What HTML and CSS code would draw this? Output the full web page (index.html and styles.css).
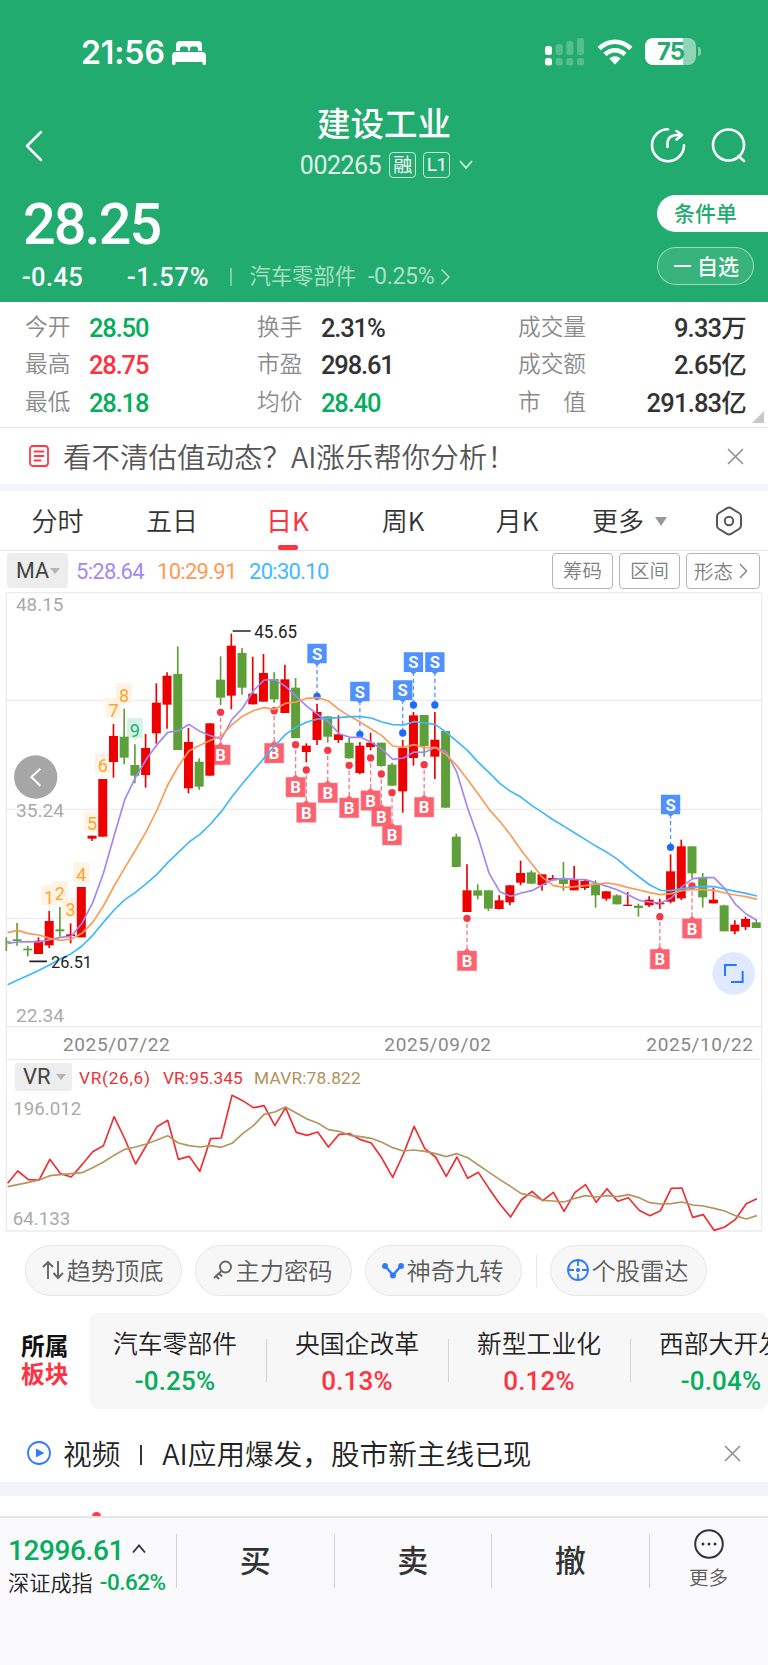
FILE: index.html
```html
<!DOCTYPE html>
<html lang="zh-CN">
<head>
<meta charset="utf-8">
<title>建设工业 002265</title>
<link rel="stylesheet" href="styles.css">
</head>
<body>
<header class="header">
  <div class="status">
    <span class="time">21:56</span>
    <svg class="bed" width="34" height="24" viewBox="0 0 34 24" fill="#fff"><path d="M4 10V4q0-4 4-4h18q4 0 4 4v6h-4V8q0-2.500-2.500-2.500h-3.500Q18 5.500 18 8v2h-2V8q0-2.500-2-2.500h-3.500Q8 5.500 8 8v2zM0 15q0-4 4-4h26q4 0 4 4v7.500q0 1.500-1.500 1.500h-.5q-1.500 0-1.500-1.500V21H3.500v1.500Q3.500 24 2 24h-.5Q0 24 0 22.500z"/></svg>
    <svg class="signal" width="40" height="28" viewBox="0 0 40 28" fill="#fff"><rect x="0" y="8" width="7" height="9" rx="2.500"/><rect x="0" y="20" width="7" height="7.500" rx="2.500"/><g opacity=".23"><rect x="10.700" y="6" width="7" height="11" rx="2.500"/><rect x="21.300" y="3" width="7" height="14" rx="2.500"/><rect x="32" y="0" width="7" height="17" rx="2.500"/><rect x="10.700" y="20" width="7" height="7.500" rx="2.500"/><rect x="21.300" y="20" width="7" height="7.500" rx="2.500"/><rect x="32" y="20" width="7" height="7.500" rx="2.500"/></g></svg>
    <svg class="wifi" width="36" height="26" viewBox="0 0 36 26" fill="none" stroke="#fff" stroke-width="4.600"><path d="M2.200 9.500Q9.500 2.800 18 2.800T33.800 9.500M8 15.500Q12.500 11.200 18 11.200T28 15.500"/><path d="M18 25.500l-5.700-6q5.700-4.500 11.400 0z" fill="#fff" stroke="none"/></svg>
    <div class="battery"><span>75</span></div><i class="nub"></i>
  </div>
  <div class="nav">
    <svg class="back" width="18" height="32" viewBox="0 0 18 32" fill="none" stroke="#fff" stroke-width="2.500" stroke-linecap="round" stroke-linejoin="round"><path d="M16 2L2 16l14 14"/></svg>
    <div class="title">
      <h1>建设工业</h1>
      <div class="code"><span class="num">002265</span><b class="rong">融</b><b>L1</b><svg width="14" height="10" viewBox="0 0 14 10" fill="none" stroke="#fff" stroke-opacity=".85" stroke-width="1.600"><path d="M1 1l6 7 6-7"/></svg></div>
    </div>
    <svg width="36" height="36" viewBox="0 0 36 36" fill="none" stroke="#fff" stroke-width="2.600" stroke-linecap="round" stroke-linejoin="round"><path d="M18 2.200a16 16 0 1 0 16 16M17.500 20v-3q0-9 10-9h4M26.500 4l5.500 4-5.500 4.500"/></svg>
    <svg class="search" width="36" height="36" viewBox="0 0 36 36" fill="none" stroke="#fff" stroke-width="2.600" stroke-linecap="round"><circle cx="17.500" cy="18" r="15.500"/><path d="M27.500 29l5.500 5"/></svg>
  </div>
  <div class="quote">
    <div class="price num">28.25</div>
    <div class="change num"><span class="c1">-0.45</span><span class="c2">-1.57%</span><i></i><span class="ind">汽车零部件</span><span class="c3">-0.25%</span><svg width="11" height="18" viewBox="0 0 11 18" fill="none" stroke="#fff" stroke-opacity=".6" stroke-width="1.700"><path d="M1.500 1.500L9 9l-7.500 7.500"/></svg></div>
    <div class="actions"><div class="cond">条件单</div><div class="fav"><i></i>自选</div></div>
  </div>
</header>

<section class="stats">
  <span>今开</span><b class="num g">28.50</b><span>换手</span><b class="num">2.31%</b><span>成交量</span><b class="num r">9.33万</b>
  <span>最高</span><b class="num red">28.75</b><span>市盈</span><b class="num">298.61</b><span>成交额</span><b class="num r">2.65亿</b>
  <span>最低</span><b class="num g">28.18</b><span>均价</span><b class="num g">28.40</b><span class="wide"><u>市</u><u>值</u></span><b class="num r">291.83亿</b>
  <i class="corner"></i>
</section>

<section class="notice ai">
  <svg width="20" height="22" viewBox="0 0 20 22" fill="none" stroke="#ff3a45" stroke-width="1.800"><rect x="1" y="1" width="18" height="20" rx="3"/><path d="M5.500 6.500h9M5.500 11h9M5.500 15.500h6" stroke-linecap="round"/></svg>
  <p>看不清估值动态？AI涨乐帮你分析！</p>
  <svg class="x" width="17" height="17" viewBox="0 0 17 17" stroke="#909090" stroke-width="1.600"><path d="M1 1l15 15M16 1L1 16"/></svg>
</section>

<nav class="tabs">
  <span>分时</span><span>五日</span><span class="on">日K</span><span>周K</span><span>月K</span><span class="more">更多<i class="tri"></i></span>
  <svg width="28" height="30" viewBox="0 0 28 30" fill="none" stroke="#555" stroke-width="2"><path d="M12 2.200q2-1.200 4 0l8 4.800q2 1.200 2 3.500v9q0 2.300-2 3.500l-8 4.800q-2 1.200-4 0L4 23q-2-1.200-2-3.500v-9Q2 8.200 4 7z"/><circle cx="14" cy="15" r="4.200"/></svg>
</nav>

<section class="ma">
  <div class="pick">MA<i class="tri"></i></div>
  <span class="num m5">5:28.64</span><span class="num m10">10:29.91</span><span class="num m20">20:30.10</span>
  <div class="btns"><span>筹码</span><span>区间</span><span class="w">形态<svg width="9" height="16" viewBox="0 0 9 16" fill="none" stroke="#888" stroke-width="1.500"><path d="M1 1l6.500 7L1 15"/></svg></span></div>
</section>

<svg class="kchart" id="kchart" viewBox="0 0 2304 1410"></svg>
<section class="vrhead">
  <div class="pick">VR<i class="tri"></i></div><span class="num v1">VR(26,6)</span><span class="num v2">VR:95.345</span><span class="num v3">MAVR:78.822</span>
</section>
<svg class="vrchart" id="vrchart" viewBox="0 216 2304 429"></svg>

<section class="tools">
  <div><svg width="22" height="20" viewBox="0 0 22 20" fill="none" stroke="#666" stroke-width="1.900"><path d="M6 19V2M1 7l5-5 5 5M16 1v17M11.500 13l4.500 5 5-5"/></svg>趋势顶底</div>
  <div><svg width="20" height="20" viewBox="0 0 20 20" fill="none" stroke="#666" stroke-width="1.900"><circle cx="12.500" cy="7" r="5.500"/><path d="M8.500 11L1 18M3 16l3 3M6 13.500l3 3"/></svg>主力密码</div>
  <div><svg width="22" height="20" viewBox="0 0 22 20" fill="#2f7bff" stroke="#2f7bff" stroke-width="2.400"><path d="M3 6l8 9 8-9" fill="none"/><circle cx="3" cy="6" r="1.800"/><circle cx="19" cy="6" r="1.800"/><circle cx="11" cy="15.500" r="1.800"/></svg>神奇九转</div>
  <i></i>
  <div><svg width="22" height="22" viewBox="0 0 22 22" fill="none" stroke="#2f7bff" stroke-width="1.800"><circle cx="11" cy="11" r="10"/><path d="M11 1v6M11 15v6M1 11h6M15 11h6"/><circle cx="11" cy="11" r="1.200" fill="#2f7bff"/></svg>个股雷达</div>
</section>

<section class="sector">
  <div class="name">所属<br><em>板块</em></div>
  <div class="list">
    <div><p>汽车零部件</p><b class="num g">-0.25%</b></div>
    <div><p>央国企改革</p><b class="num red">0.13%</b></div>
    <div><p>新型工业化</p><b class="num red">0.12%</b></div>
    <div><p>西部大开发</p><b class="num g">-0.04%</b></div>
  </div>
</section>

<section class="notice video">
  <svg width="24" height="24" viewBox="0 0 24 24" fill="none" stroke="#2f7bff" stroke-width="1.800"><circle cx="12" cy="12" r="11"/><path d="M9.500 8.300l7 3.700-7 3.700z" fill="#2f7bff" stroke-width="1"/></svg>
  <p>视频<i></i>AI应用爆发，股市新主线已现</p>
  <svg class="x" width="17" height="17" viewBox="0 0 17 17" stroke="#909090" stroke-width="1.600"><path d="M1 1l15 15M16 1L1 16"/></svg>
</section>
<div class="peek"><i></i></div>

<footer class="bar">
  <div class="index">
    <div class="pt num">12996.61<svg width="14" height="10" viewBox="0 0 14 10" fill="none" stroke="#333" stroke-width="1.800"><path d="M1 8.500l6-7 6 7"/></svg></div>
    <div class="nm">深证成指<span class="num">-0.62%</span></div>
  </div>
  <div class="act">买</div><div class="act">卖</div><div class="act">撤</div>
  <div class="act last"><svg width="30" height="30" viewBox="0 0 30 30" fill="#333"><circle cx="15" cy="15" r="13.800" fill="none" stroke="#333" stroke-width="2"/><circle cx="9" cy="15" r="1.500"/><circle cx="15" cy="15" r="1.500"/><circle cx="21" cy="15" r="1.500"/></svg>更多</div>
</footer>
<script src="chart.js"></script>
</body>
</html>
```
FILE: styles.css
```css
* { box-sizing: border-box; margin: 0; padding: 0; }
body { width: 768px; height: 1665px; overflow: hidden; background: #fff; color: #333; font-family: "Liberation Sans", "Noto Sans CJK SC", sans-serif; }
i, em { font-style: normal; }
svg { display: block; flex: none; }
.num { font-family: Roboto, "Noto Sans CJK SC", sans-serif; letter-spacing: -0.045em; white-space: nowrap; }
.g { color: #06ad5c; }
.red { color: #ff333f; }
.tri { border: 6.5px solid transparent; border-top: 9px solid #999; border-bottom: 0; }

.header { height: 302px; background: #22ab6e; color: #fff; }
.status { height: 104px; display: flex; align-items: flex-start; padding: 38px 0 0 81px; }
.time { width: 91px; font: 600 32px/30px Inter, sans-serif; letter-spacing: -0.1px; }
.bed { margin-top: 3px; }
.signal { margin-left: 339px; }
.wifi { margin: 1px 0 0 12px; }
.battery { width: 51px; height: 27px; margin-left: 12px; border-radius: 8px; overflow: hidden; background: linear-gradient(90deg, #fff 75%, #90d5b7 75%); color: #22ab6e; text-align: center; font: 700 24px/28px Inter, sans-serif; letter-spacing: -1px; }
.nub { width: 3px; height: 9px; margin: 9px 0 0 1.500px; border-radius: 0 3px 3px 0; background: #7fcea9; }
.nav { height: 82px; display: flex; align-items: flex-start; padding-left: 25px; }
.back { margin-top: 26px; }
.title { width: 607px; padding-left: 73px; height: 82px; text-align: center; }
.title h1 { margin-right: -2px; font: 500 33.500px/36px "Noto Sans CJK SC"; }
.title + svg { margin-top: 23px; }
.search { margin-left: 25px; margin-top: 23px; }
.code { display: flex; align-items: center; justify-content: center; height: 30px; margin: 10px -7px 0 0; }
.code .num { font-size: 25px; letter-spacing: -0.5px; opacity: .85; margin-right: 8px; line-height: 30px; padding-top: 2px; }
.code b { width: 27px; height: 26px; margin-right: 7px; border: 1.500px solid rgba(255,255,255,.75); border-radius: 4px; font: 400 19px/23px Roboto, sans-serif; letter-spacing: -0.5px; }
.code .rong { font: 400 19px/22px "Noto Sans CJK SC"; letter-spacing: 0; }
.code svg { margin-left: 2px; }
.quote { height: 116px; display: grid; grid-template-columns: 657px 111px; grid-template-rows: 75px 41px; }
.price { padding-left: 23px; font-size: 57.500px; line-height: 77px; font-weight: 500; letter-spacing: -1.900px; }
.change { display: flex; align-items: center; padding-left: 22px; font-size: 25.500px; font-weight: 500; line-height: 32px; height: 32px; letter-spacing: .4px; }
.c1 { width: 105px; }
.c2 { width: 103px; letter-spacing: .7px; }
.change i { width: 1.500px; height: 18px; background: rgba(255,255,255,.4); }
.ind { margin-left: 18px; padding-bottom: 1px; font-size: 21.300px; font-weight: 400; opacity: .6; letter-spacing: 0; }
.c3 { margin-left: 12px; width: 72px; font-size: 23px; font-weight: 400; opacity: .62; letter-spacing: -0.300px; }
.actions { grid-column: 2; grid-row: 1 / 3; padding-top: 9px; font: 400 21px/34px "Noto Sans CJK SC"; }
.cond { height: 37px; padding-left: 17px; border-radius: 19px 0 0 19px; background: #fff; color: #22ab6e; font-weight: 500; }
.fav { width: 97px; height: 38px; margin-top: 15px; display: flex; align-items: center; border: 1px solid rgba(255,255,255,.5); border-radius: 19px; background: rgba(255,255,255,.1); padding: 0 0 2px 16px; font-weight: 500; }
.fav i { width: 17px; height: 2px; margin: 1px 6px 0 0; background: #fff; }

.stats { position: relative; height: 126px; padding: 6px 22px 6px 25px; display: grid; grid-template-columns: 64px 168px 64px 197px 80px 148px; grid-template-rows: repeat(3, 37.500px); align-items: center; border-bottom: 1px solid #e8e8e8; }
.stats span { color: #8a8a8a; font: 350 22.700px/32px "Noto Sans CJK SC"; white-space: nowrap; padding-bottom: 2px; }
.stats .wide { display: flex; width: 68px; justify-content: space-between; }
.stats u { text-decoration: none; }
.stats b { font-size: 25.500px; font-weight: 500; line-height: 32px; letter-spacing: -1.150px; padding-top: 2px; }
.stats .r { text-align: right; letter-spacing: -0.8px; }
.corner { position: absolute; right: 4px; bottom: 4px; border: 6.500px solid transparent; border-right-color: #c8c8c8; border-bottom-color: #c8c8c8; }

.notice { display: flex; align-items: center; }
.notice p { flex: 1; font: 350 28.500px/40px "Noto Sans CJK SC"; white-space: nowrap; }
.ai { height: 63px; padding: 0 24px 0 29px; border-bottom: 7px solid #f3f4f9; }
.ai p { margin-left: 14px; color: #555; }

.tabs { height: 60px; display: grid; grid-template-columns: 115px 114px 117px 114px 114px 135px 40px; align-items: center; border-bottom: 1px solid #e4e4e4; font: 350 26px/57px "Noto Sans CJK SC"; color: #333; }
.tabs span { text-align: center; height: 59px; }
.tabs .on { position: relative; color: #ff333f; font-weight: 400; }
.tabs .on::after { content: ""; position: absolute; left: 49px; bottom: 0; width: 20px; height: 5px; border-radius: 2px; background: #ff333f; }
.tabs .more { display: flex; align-items: center; padding: 0 0 2px 18px; }
.more .tri { margin: 4px 0 0 11px; }
.tabs svg { margin-left: 6px; }

.ma { height: 39px; display: flex; padding: 2px 7px 0; align-items: flex-start; font-size: 22px; line-height: 36px; }
.pick { background: #ededed; border-radius: 3px; display: flex; align-items: center; color: #444; font-family: Roboto, sans-serif; }
.ma .pick { width: 61px; height: 35px; padding-left: 9px; font-size: 21.5px; }
.pick .tri { border-width: 5px; border-top: 6px solid #b4b4b4; border-bottom: 0; margin-left: 1px; }
.m5 { color: #a58af5; margin-left: 8px; width: 81px; }
.m10 { color: #ff9a55; width: 92px; }
.m20 { color: #44b9ff; }
.ma .num { letter-spacing: -0.720px; line-height: 38px; }
.btns { display: flex; gap: 6px; margin: 0 1px 0 auto; }
.btns span { height: 36px; width: 61px; border: 1.500px solid #b5b5b5; border-radius: 4px; text-align: center; font: 350 19.500px/32px "Noto Sans CJK SC"; color: #808080; }
.btns .w { width: 74px; display: flex; align-items: center; padding-left: 7px; gap: 6px; }
.kchart { width: 768px; height: 470px; }
.kchart text, .vrchart text { font-family: Roboto, sans-serif; }
.vrhead { height: 32px; margin: 0 6px; padding: 3px 0 0 8px; display: flex; border-left: 1px solid #eaeaea; border-right: 1px solid #eaeaea; font-size: 17.300px; line-height: 30px; }
.vrhead .pick { width: 57px; height: 28px; padding-left: 8px; font-size: 22px; margin-right: 7px; }
.vrhead .pick .tri { margin-left: 5px; }
.vrhead .num { letter-spacing: .1px; }
.v1, .v2 { color: #eb3136; }
.vrhead .v1 { width: 84px; letter-spacing: .7px; }
.v2 { width: 91px; }
.vrhead .v3 { color: #b1905a; letter-spacing: .2px; }
.vrchart { width: 768px; height: 143px; }

.tools { height: 78px; padding: 10px 0 0 25px; display: flex; font: 350 24.300px/46px "Noto Sans CJK SC"; color: #5c5c5c; }
.tools div { width: 157px; height: 51px; padding: 0 1px 2px 0; margin-right: 13px; border: 1px solid #e6e6e6; border-radius: 26px; background: #f7f7f7; display: flex; align-items: center; justify-content: center; white-space: nowrap; gap: 2px; }
.tools > i { width: 1px; height: 33px; background: #e8e8e8; margin: 9px 13px 0 1px; }
.sector { height: 96px; display: flex; }
.name { width: 90px; padding: 18px 0 0 21px; font: 700 23.700px/28px "Noto Sans CJK SC"; color: #111; }
.name em { color: #ff333f; }
.list { width: 678px; display: flex; overflow: hidden; background: #f7f7f7; border-radius: 8px; padding-top: 11px; }
.list div { position: relative; flex: none; width: 182px; text-align: center; padding-right: 12px; white-space: nowrap; }
.list div::after { content: ""; position: absolute; right: 5px; top: 15px; width: 1px; height: 43px; background: #d5d5d5; }
.list p { font: 350 24.800px/37px "Noto Sans CJK SC"; color: #222; }
.list b { font-size: 26px; line-height: 40px; font-weight: 500; letter-spacing: 0.150px; }
.video { height: 73px; padding: 15px 27px 0 27px; }
.video p { margin-left: 12px; color: #222; font-size: 28.650px; }
.video p i { display: inline-block; width: 2px; height: 20px; background: #333; margin: 0 20px 0 20px; }
.peek { height: 36px; border-top: 14px solid #f3f4f9; border-bottom: 2px solid #e6e6e8; overflow: hidden; }
.peek i { display: block; width: 9px; height: 9px; border-radius: 50%; background: #ff3a45; margin: 16px 0 0 92px; }
.bar { height: 147px; background: #fafafd; display: flex; padding-top: 16px; }
.index { width: 176px; padding-left: 8px; }
.pt { display: flex; align-items: center; gap: 8px; height: 32px; font-size: 28px; font-weight: 500; color: #06ad5c; letter-spacing: -0.400px; }
.pt svg { margin-bottom: 2px; }
.nm { font: 350 21.200px/32px "Noto Sans CJK SC"; display: flex; color: #222; }
.nm .num { margin-left: 7px; color: #06ad5c; font-size: 22.500px; font-weight: 500; letter-spacing: -0.500px; }
.act { width: 157.500px; height: 54px; border-left: 1.500px solid #d2d2d4; text-align: center; font: 500 31px/50px "Noto Sans CJK SC"; }
.last { width: 119px; font: 350 19.500px/35px "Noto Sans CJK SC"; color: #5c5c5c; display: flex; flex-direction: column; align-items: center; }
.last svg { margin-top: -5px; }
```
FILE: chart.js
```js
// Candles: [rising, wick top, body top, body bottom, wick bottom]
const candles = [
  [0,1042,1054,1058,1083],[0,999,1048,1053,1067],[0,1068,1076,1081,1099],[1,1042,1052,1092,1092],[1,963,993,1066,1074],
  [0,951,1018,1024,1040],[1,1000,1033,1038,1060],[1,891,891,1042,1042],[1,737,737,746,753],[1,567,567,740,740],
  [1,402,438,516,563],[0,356,440,503,523],[0,463,525,557,580],[1,432,474,555,593],[1,280,338,430,461],
  [1,247,257,344,416],[0,169,252,480,480],[1,414,456,595,610],[0,505,515,590,599],[1,400,400,557,557],
  [0,199,269,323,345],[1,131,167,317,358],[0,174,189,293,314],[1,200,311,343,343],[1,192,249,335,335],
  [0,247,267,328,338],[1,224,268,369,369],[0,264,293,444,444],[1,460,467,486,517],[1,341,366,450,465],
  [0,379,379,440,458],[1,376,433,450,459],[0,443,458,505,506],[1,456,467,549,553],[1,428,458,471,481],
  [0,458,458,528,530],[0,519,524,587,587],[1,450,474,604,668],[1,366,376,504,527],[0,375,375,468,500],
  [1,366,449,500,567],[0,423,423,653,653],[0,731,740,831,831],[1,823,901,966,966],[0,883,901,917,928],
  [0,901,901,956,963],[1,916,931,957,958],[1,885,886,937,946],[1,812,849,878,886],[0,841,847,881,882],
  [1,852,853,885,902],[1,855,864,871,871],[0,816,866,882,902],[1,828,868,901,901],[1,870,873,894,900],
  [0,871,880,916,953],[1,903,904,926,932],[0,913,916,943,943],[1,906,944,948,948],[0,941,947,954,980],
  [1,919,929,946,951],[1,926,938,943,957],[1,793,844,935,940],[1,749,769,925,930],[0,769,769,850,865],
  [0,849,864,922,953],[1,893,929,940,940],[0,944,946,1024,1024],[1,991,1004,1024,1033],[1,980,987,1011,1020],[0,990,997,1014,1014]
];
const ma5 = [1060,1056,1055,1056,1049,1042,1039,1000,938,850,737,628,562,508,464,427,422,403,424,437,447,388,354,302,270,269,289,319,349,373,396,431,442,442,457,477,508,504,486,487,472,485,548,655,745,850,905,919,909,902,884,868,866,868,869,879,889,900,915,931,936,939,924,890,866,863,863,896,943,972,991];
const ma10 = [1028,1021,1031,1035,1045,1051,1047,1030,997,948,888,833,780,724,660,585,528,482,466,451,438,404,378,362,353,358,340,336,325,323,333,359,379,397,417,437,468,472,464,473,473,494,527,569,613,658,694,735,781,822,863,887,892,890,887,882,879,884,893,900,908,914,911,902,898,899,901,909,915,920,928];
const ma20 = [1184,1170,1156,1141,1124,1106,1091,1068,1036,997,960,929,907,881,853,818,787,756,733,702,665,620,580,542,504,468,433,411,396,387,385,383,380,380,384,396,404,405,395,399,404,427,454,482,517,548,580,604,622,647,668,690,709,729,749,769,787,808,836,861,885,901,902,896,892,889,890,897,904,910,918];
const vr = [490,453,479,480,418,461,471,434,395,377,290,357,432,377,320,301,418,409,454,356,354,226,242,263,257,317,263,337,346,336,381,343,341,359,369,415,472,402,319,386,411,469,411,475,457,506,552,591,540,514,542,517,574,518,494,547,506,544,533,571,587,572,505,504,592,584,631,621,598,551,536];
const mavr = [500,494,487,480,467,464,461,458,443,426,406,388,381,372,360,347,369,377,381,377,382,370,341,317,283,276,261,279,297,309,329,334,346,350,355,367,383,393,390,394,401,410,401,413,435,457,479,499,521,527,541,543,546,535,527,531,527,530,524,533,548,552,551,546,555,558,565,573,587,597,587];
const buys = [[20,367],[25,362],[27,464],[28,540],[30,481],[32,526],[34,504],[35,552],[36,608],[39,524],[43,985],[61,980],[64,888]];
const sells = [[29,319],[33,433],[37,429],[38,345],[40,345],[62,772]];
const counts = [[4,885],[5,873],[6,922],[7,817],[8,663],[9,490],[10,323],[11,279],[12,385]];

const X = i => 19 + 32.14 * i;
const line = (a, c, w) => `<polyline fill="none" stroke="${c}" stroke-width="${w}" stroke-linejoin="round" points="${a.map((y, i) => (i ? X(i) + 2 : 23) + ',' + y).join(' ')}"/>`;
const text = (s, x, y, size, len, c) => `<text x="${x}" y="${y}" font-size="${size}" textLength="${len}" lengthAdjust="spacingAndGlyphs" fill="${c}">${s}</text>`;
const spaced = (s, x, y, size, len, c) => `<text x="${x}" y="${y}" font-size="${size}" textLength="${len}" fill="${c}">${s}</text>`;
const frame = d => `<path d="${d}" fill="none" stroke="#ececec" stroke-width="4"/>`;

let k = frame('M18 8H2285M18 331H2285M18 658H2285M18 985H2285M18 1310H2285M18 1408H2285M19 8V1410M2285 8V1410');
k += text('48.15', 48, 64, 56, 142, '#aaa') + text('35.24', 48, 681, 56, 144, '#aaa') + text('22.34', 48, 1296, 56, 144, '#aaa');
k += spaced('2025/07/22', 189, 1383, 57, 320, '#888') + spaced('2025/09/02', 1153, 1383, 57, 320, '#888') + spaced('2025/10/22', 1939, 1383, 57, 320, '#888');
for (const [i, y] of buys) {
  const x = X(i), t = y + 98;
  k += `<path d="M${x} ${y + 16}V${t - 7}" stroke="#f77b85" stroke-width="4" stroke-dasharray="13 8"/><circle cx="${x}" cy="${y}" r="11" fill="#f83745"/>
  <path d="M${x - 29} ${t}h20l9-8 9 8h20v59h-58z" fill="#fa5966" fill-opacity=".94" stroke="#ff8a92" stroke-width="1.500"/>
  <text x="${x}" y="${t + 48}" font-size="50" font-weight="700" text-anchor="middle" fill="#fff">B</text>`;
}
for (const [i, y] of sells) {
  const x = X(i), t = y - 158;
  k += `<path d="M${x} ${t + 66}V${y - 10}" stroke="#5b97ff" stroke-width="4" stroke-dasharray="13 8" stroke-dashoffset="-13"/><circle cx="${x}" cy="${y}" r="11" fill="#1a6cff"/>
  <path d="M${x - 29} ${t}h58v59h-20l-9 8-9-8h-20z" fill="#5090ff"/>
  <text x="${x}" y="${t + 48}" font-size="50" font-weight="700" text-anchor="middle" fill="#fff">S</text>`;
}
counts.forEach(([i, y], n) => {
  const x = X(i), last = n === 8;
  k += `<path d="M${x - 24} ${y}h48v60h-16l-8 7-8-7h-16z" fill="${last ? '#d8f1e6' : '#fff3e6'}"/>
  <text x="${x}" y="${y + 57}" font-size="54" text-anchor="middle" fill="${last ? '#16b36b' : '#ffa526'}">${n + 1}</text>`;
});
candles.forEach(([up, h, a, b, l], i) => {
  const x = X(i), c = up ? '#ee0000' : '#5e9f39', left = i ? x - 13.5 : 18;
  k += `<path d="M${x} ${h}V${l}" stroke="${c}" stroke-width="5"/><path d="M${left} ${a}H${x + 13.5}V${b}H${left}z" fill="${c}"/>`;
});
k += line(ma5, '#a286f4', 5) + line(ma10, '#ff9a55', 5) + line(ma20, '#40b7fc', 5);
k += '<path d="M698 123H752M88 1114H141" stroke="#222" stroke-width="5"/>';
k += text('45.65', 763, 143, 54, 128, '#222') + text('26.51', 153, 1133, 52, 123, '#222');
k += '<circle cx="107" cy="561" r="65" fill="#a6a6a6"/><path d="M121 536L94 561l27 26" fill="none" stroke="#fff" stroke-width="6"/>';
k += '<circle cx="2201" cy="1150" r="64" fill="#dfe9ff"/><path d="M2175 1158V1125H2210M2228 1143V1176H2193" fill="none" stroke="#2878ff" stroke-width="6"/>';
document.getElementById('kchart').innerHTML = k;

document.getElementById('vrchart').innerHTML =
  frame('M19 216V633H2285V216') + text('196.012', 40, 285, 56, 204, '#aaa') + text('64.133', 38, 616, 56, 173, '#aaa') +
  line(vr, '#ed2f33', 5) + line(mavr, '#b4955e', 5);
```
